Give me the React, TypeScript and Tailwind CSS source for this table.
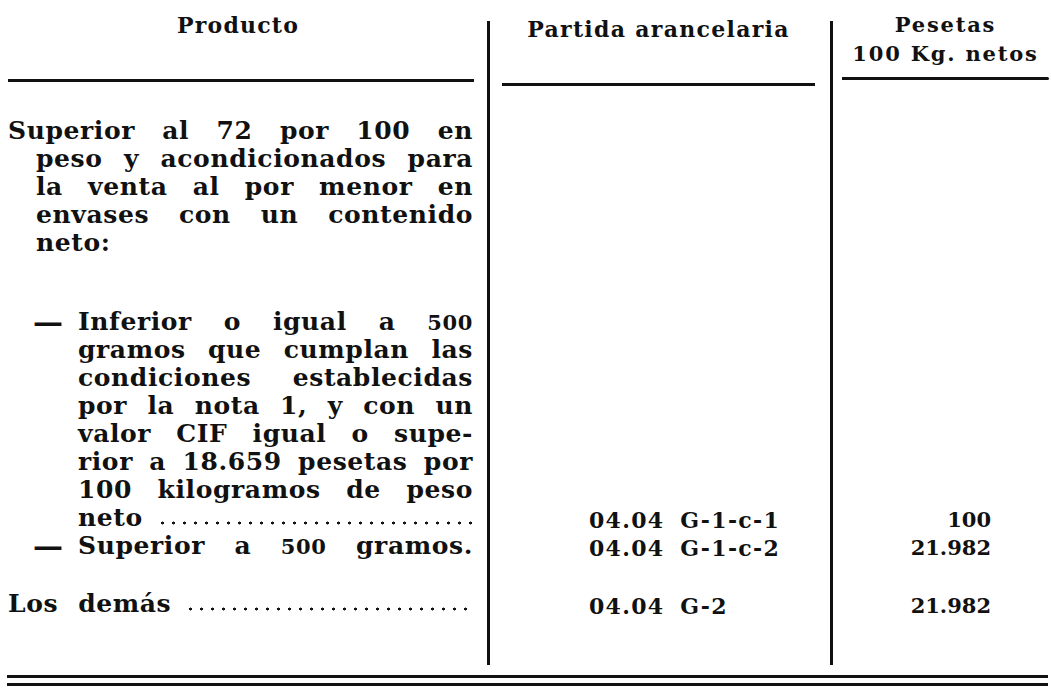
import React from "react";

// Justified line of the product column
const JLine: React.FC<{ children: React.ReactNode; className?: string }> = ({ children, className = "" }) => (
  <div className={`h-[28px] leading-[28px] text-justify [text-align-last:justify] ${className}`}>
    {children}
  </div>
);

const Line: React.FC<{ children: React.ReactNode; className?: string }> = ({ children, className = "" }) => (
  <div className={`h-[28px] leading-[28px] ${className}`}>{children}</div>
);

// dotted leader up to the column edge
const Dots = () => (
  <span className="ml-[14px] flex-1 self-end mb-[7px] h-[4px] bg-[radial-gradient(circle,#111_1.3px,transparent_1.7px)] bg-[length:11px_4px] bg-repeat-x" />
);

const Dash = () => (
  <div className="w-[70px] shrink-0 pl-[25px]">
    <Line className="text-[30px]">—</Line>
  </div>
);

const small = "text-[21px]";

export default function App() {
  return (
    <div className="w-[1051px] h-[695px] bg-white text-[#111] font-['DejaVu_Serif',serif] font-bold overflow-hidden pt-[21px]">
      <div className="grid grid-cols-[487px_343px_221px] grid-rows-[96px_548px]">
        {/* headers */}
        <div className="pl-[8px] pr-[13px] flex flex-col">
          <div className="-mt-[10px] h-[28px] leading-[28px] text-[22px] tracking-[1.2px] text-center pr-[6px]">Producto</div>
          <div className="mt-[40px] h-[3px] bg-[#111]" />
        </div>
        <div className="border-l-[3px] border-[#111] pl-[12px] pr-[15px] flex flex-col">
          <div className="-mt-[6px] h-[28px] leading-[28px] text-[22px] tracking-[1.3px] text-center">Partida arancelaria</div>
          <div className="mt-[40px] h-[3px] bg-[#111]" />
        </div>
        <div className="border-l-[3px] border-[#111] pl-[9px] pr-[2px] flex flex-col">
          <div className="-mt-[11px] text-[21px] tracking-[1.8px] text-center leading-[29px]">
            <div>Pesetas</div>
            <div>100 Kg. netos</div>
          </div>
          <div className="mt-[9px] h-[3px] bg-[#111] rounded-r-full" />
        </div>

        {/* body: product */}
        <div className="min-w-0 pl-[8px] pr-[14px] text-[25px] tracking-[0.6px]">
          <JLine>Superior al 72 por 100 en</JLine>
          <div className="pl-[28px]">
            <JLine>peso y acondicionados para</JLine>
            <JLine>la venta al por menor en</JLine>
            <JLine>envases con un contenido</JLine>
            <Line>neto:</Line>
          </div>

          <div className="mt-[51px] flex">
            <Dash />
            <div className="flex-1 min-w-0">
              <JLine>Inferior o igual a <span className={small}>500</span></JLine>
              <JLine>gramos que cumplan las</JLine>
              <JLine>condiciones establecidas</JLine>
              <JLine>por la nota 1, y con un</JLine>
              <JLine>valor CIF igual o supe-</JLine>
              <JLine>rior a 18.659 pesetas por</JLine>
              <JLine>100 kilogramos de peso</JLine>
              <div className="h-[28px] leading-[28px] flex">
                <span>neto</span>
                <Dots />
              </div>
            </div>
          </div>
          <div className="flex">
            <Dash />
            <div className="flex-1 min-w-0">
              <JLine>Superior a <span className={small}>500</span> gramos.</JLine>
            </div>
          </div>

          <div className="mt-[30px] flex h-[28px] leading-[28px]">
            <span>Los</span>
            <span className="ml-[20px]">demás</span>
            <Dots />
          </div>
        </div>

        {/* body: tariff heading */}
        <div className="border-l-[3px] border-[#111] pl-[99px] pt-[389px] text-[22px] tracking-[1.3px] [word-spacing:7px]">
          <Line>04.04 G-1-c-1</Line>
          <Line>04.04 G-1-c-2</Line>
          <Line className="mt-[30px]">04.04 G-2</Line>
        </div>

        {/* body: pesetas */}
        <div className="border-l-[3px] border-[#111] pr-[60px] pt-[389px] text-[21px] text-right">
          <Line>100</Line>
          <Line>21.982</Line>
          <Line className="mt-[30px]">21.982</Line>
        </div>
      </div>

      {/* closing double rule */}
      <div className="mt-[10px] ml-[7px] mr-[3px] flex flex-col gap-[5px]">
        <div className="h-[3px] bg-[#111]" />
        <div className="h-[3px] bg-[#111]" />
      </div>
    </div>
  );
}
